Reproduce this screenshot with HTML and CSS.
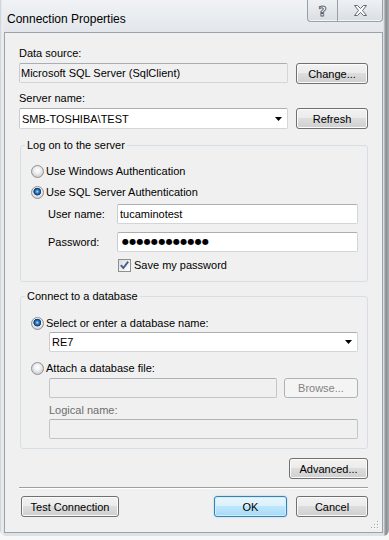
FILE: index.html
```html
<!DOCTYPE html>
<html lang="en">
<head>
    <meta charset="UTF-8">
    <title>Connection Properties</title>
    <link rel="stylesheet" href="styles.css">
</head>
<body>
    <div class="window">
        <div class="titlebar">
            <span class="title">Connection Properties</span>
            <div class="caption-buttons">
                <span class="cap help">?</span>
                <span class="cap close">
                    <svg width="13" height="11" viewBox="0 0 13 11">
                        <polygon points="0.5,0.5 3.5,0.5 6.5,3.5 9.5,0.5 12.5,0.5 8.5,5.5 12.5,10.5 9.5,10.5 6.5,7.5 3.5,10.5 0.5,10.5 4.5,5.5" fill="#fff" stroke="#5f6871" stroke-width="1"/>
                    </svg>
                </span>
            </div>
        </div>

        <div class="client">
            <div class="label">Data source:</div>
            <div class="row">
                <div class="box readonly">Microsoft SQL Server (SqlClient)</div>
                <button class="button w72">Change...</button>
            </div>

            <div class="label spaced">Server name:</div>
            <div class="row">
                <div class="box combo">
                    <span>SMB-TOSHIBA\TEST</span>
                    <svg class="arrow" width="7" height="4" viewBox="0 0 7 4"><polygon points="0,0 7,0 3.5,4" fill="#000"/></svg>
                </div>
                <button class="button w72 tall">Refresh</button>
            </div>

            <fieldset class="group logon">
                <legend>Log on to the server</legend>
                <div class="group-body">
                    <div class="option"><span class="radio"></span>Use Windows Authentication</div>
                    <div class="option second"><span class="radio on"></span>Use SQL Server Authentication</div>
                    <div class="field user">
                        <span class="field-label">User name:</span>
                        <div class="box">tucaminotest</div>
                    </div>
                    <div class="field pass">
                        <span class="field-label">Password:</span>
                        <div class="box dots">&#9679;&#9679;&#9679;&#9679;&#9679;&#9679;&#9679;&#9679;&#9679;&#9679;&#9679;&#9679;</div>
                    </div>
                    <div class="check">
                        <span class="checkbox">
                            <svg width="11" height="11" viewBox="0 0 11 11"><polyline points="1.8,5.2 4.3,8 9.2,1.6" fill="none" stroke="#4a5f8e" stroke-width="1.9"/></svg>
                        </span>Save my password
                    </div>
                </div>
            </fieldset>

            <fieldset class="group database">
                <legend>Connect to a database</legend>
                <div class="group-body">
                    <div class="option"><span class="radio on"></span>Select or enter a database name:</div>
                    <div class="indent db-name">
                        <div class="box combo">
                            <span>RE7</span>
                            <svg class="arrow" width="7" height="4" viewBox="0 0 7 4"><polygon points="0,0 7,0 3.5,4" fill="#000"/></svg>
                        </div>
                    </div>
                    <div class="option attach"><span class="radio"></span>Attach a database file:</div>
                    <div class="indent file-row">
                        <div class="box disabled"></div>
                        <button class="button browse" disabled>Browse...</button>
                    </div>
                    <div class="indent logical-label">Logical name:</div>
                    <div class="indent logical-box">
                        <div class="box disabled"></div>
                    </div>
                </div>
            </fieldset>

            <div class="advanced-row">
                <button class="button advanced">Advanced...</button>
            </div>

            <div class="separator"></div>

            <div class="footer-row">
                <button class="button test">Test Connection</button>
                <div class="footer-right">
                    <button class="button ok">OK</button>
                    <button class="button w72">Cancel</button>
                </div>
            </div>

            <svg class="grip" width="8" height="8" viewBox="0 0 8 8">
                <rect x="6" y="0" width="1" height="1" fill="#a6a6a6"/>
                <rect x="3" y="3" width="1" height="1" fill="#a6a6a6"/>
                <rect x="6" y="3" width="1" height="1" fill="#a6a6a6"/>
                <rect x="0" y="6" width="1" height="1" fill="#a6a6a6"/>
                <rect x="3" y="6" width="1" height="1" fill="#a6a6a6"/>
                <rect x="6" y="6" width="1" height="1" fill="#a6a6a6"/>
                <rect x="7" y="1" width="1" height="1" fill="#fff"/>
                <rect x="4" y="4" width="1" height="1" fill="#fff"/>
                <rect x="7" y="4" width="1" height="1" fill="#fff"/>
                <rect x="1" y="7" width="1" height="1" fill="#fff"/>
                <rect x="4" y="7" width="1" height="1" fill="#fff"/>
                <rect x="7" y="7" width="1" height="1" fill="#fff"/>
            </svg>
        </div>
    </div>
</body>
</html>
```

FILE: styles.css
```css
body {
    margin: 0;
    width: 389px;
    height: 540px;
    overflow: hidden;
    background-color: #f7f7f7;
    font-family: 'Liberation Sans', Arial, sans-serif;
    font-size: 11px;
    line-height: 13px;
    color: #000;
}
.window {
    height: 536px;
    box-sizing: border-box;
    padding: 0 6px 3px 4px;
    display: flex;
    flex-direction: column;
    border-radius: 0 0 6px 6px;
    background:
        linear-gradient(to right, rgba(0,0,0,0) 383px, #f6f7f8 383px, #c3c8cd 384px, #868c92 386px, #a9aeb3 389px),
        linear-gradient(to right, #c9ced3 0, #eef0f2 2px, rgba(0,0,0,0) 4px),
        linear-gradient(180deg, #f0f2f5 0, #e3e7eb 32px, #dde2e7 100%);
}
.titlebar {
    height: 32px;
    display: flex;
    justify-content: space-between;
    align-items: flex-start;
}
.title {
    margin: 12px 0 0 3px;
    font-size: 12px;
    line-height: 14px;
}
.caption-buttons {
    display: flex;
}
.cap {
    height: 22px;
    box-sizing: border-box;
    display: flex;
    align-items: center;
    justify-content: center;
    border: 1px solid #98a0a9;
    border-top: none;
    background: linear-gradient(180deg, #eef1f4 0, #e4e8ec 50%, #d9dee4 100%);
    box-shadow: inset 0 -1px 0 #f4f6f8;
}
.help {
    width: 30px;
    border-right: none;
    border-radius: 0 0 0 4px;
    font-family: 'DejaVu Sans', sans-serif;
    font-size: 14px;
    font-weight: bold;
    color: #fff;
    -webkit-text-stroke: 1px #5f6871;
    padding-top: 1px;
}
.close {
    width: 46px;
    border-radius: 0 0 4px 0;
}

/* client area */
.client {
    flex: 1;
    position: relative;
    border: 1px solid #9aa2aa;
    background-color: #f0f0f0;
    padding: 14px 14px 15px 14px;
}
.label {
    margin-bottom: 3px;
}
.label.spaced {
    margin-top: 8px;
}
.row {
    display: flex;
    align-items: flex-start;
    gap: 8px;
}
.box {
    flex: 1;
    height: 20px;
    box-sizing: border-box;
    border: 1px solid #d2d6da;
    border-top-color: #abadb3;
    border-left-color: #c9ccd1;
    border-radius: 2px;
    background-color: #fff;
    padding: 0 2px;
    line-height: 18px;
    white-space: nowrap;
    overflow: hidden;
}
.box.readonly {
    background-color: #f0f0f0;
    padding-left: 1px;
}
.box.disabled {
    background-color: #f0f0f0;
    border-color: #c2c5c9;
    border-top-color: #adb2b5;
}
.box.combo {
    height: 21px;
    display: flex;
    justify-content: space-between;
    align-items: center;
    padding-right: 5px;
}
.box.dots {
    font-family: 'DejaVu Sans', sans-serif;
    font-size: 8px;
    letter-spacing: 0.3px;
    padding-left: 4px;
}

/* buttons */
.button {
    height: 21px;
    box-sizing: border-box;
    padding: 0;
    border: 1px solid #707070;
    border-radius: 3px;
    background: linear-gradient(180deg, #f2f2f2 0, #ebebeb 50%, #dddddd 50%, #cfcfcf 100%);
    box-shadow: inset 0 0 0 1px #fbfbfb;
    font-family: 'Liberation Sans', Arial, sans-serif;
    font-size: 11px;
    color: #000;
    text-align: center;
}
.w72 {
    width: 72px;
}
.button.browse {
    width: 74px;
    height: 20px;
    border-color: #adb2b5;
    background: #f4f4f4;
    box-shadow: none;
    color: #838383;
}
.button.advanced {
    width: 79px;
}
.button.test {
    width: 98px;
    margin-left: 2px;
}
.button.ok {
    width: 73px;
    border-color: #3c7fb1;
    background: linear-gradient(180deg, #eaf6fd 0, #d9f0fc 50%, #bee6fd 50%, #a7d9f5 100%);
    box-shadow: inset 0 0 0 1px #cdeefd, 0 0 2px #8fd0f5;
}

/* group boxes */
.group {
    margin: 10px 0 0 1px;
    padding: 0;
    min-width: 0;
    border: 1px solid #d5dfe5;
    border-radius: 3px;
}
.group legend {
    margin-left: 4px;
    padding: 0 2px;
    line-height: 13px;
}
.group.database {
    margin-top: 8px;
}
.group-body {
    padding: 13px 9px 9px 10px;
}
.database .group-body {
    padding-top: 14px;
}
.option {
    display: flex;
    align-items: center;
    height: 13px;
}
.option.second {
    margin-top: 8px;
}
.option.attach {
    margin-top: 10px;
}
.radio {
    width: 13px;
    height: 13px;
    box-sizing: border-box;
    margin-right: 2px;
    border-radius: 50%;
    border: 1px solid #8e9196;
    background: radial-gradient(circle at 50% 40%, #ffffff 0, #f0f0f0 3px, #d2d3d5 6px);
}
.radio.on {
    background: radial-gradient(circle at 48% 42%, #bfe6fc 0, #3d8cd4 1.4px, #0f4c8a 3px, #163f6e 3.6px, #f1f1f1 4.2px, #d2d3d5 6px);
}
.field {
    display: flex;
    align-items: center;
    margin-left: 17px;
}
.field.user {
    margin-top: 5px;
}
.field.pass {
    margin-top: 8px;
}
.field-label {
    width: 69px;
}
.check {
    display: flex;
    align-items: center;
    height: 13px;
    margin: 7px 0 0 87px;
}
.checkbox {
    width: 13px;
    height: 13px;
    box-sizing: border-box;
    margin-right: 3px;
    border: 1px solid #8e8f8f;
    background: linear-gradient(135deg, #dcdcdc 0, #f6f6f6 70%, #ffffff 100%);
    display: flex;
    align-items: center;
    justify-content: center;
}
.indent {
    margin-left: 18px;
}
.db-name {
    margin-top: 2px;
}
.db-name .box.combo {
    height: 20px;
}
.file-row {
    display: flex;
    gap: 7px;
    margin-top: 3px;
}
.logical-label {
    margin-top: 6px;
    color: #6d6d6d;
}
.logical-box {
    display: flex;
    margin-top: 2px;
}

.advanced-row {
    display: flex;
    justify-content: flex-end;
    margin-top: 9px;
}
.separator {
    margin-top: 8px;
    border-top: 1px solid #a0a0a0;
    border-bottom: 1px solid #ffffff;
}
.footer-row {
    display: flex;
    justify-content: space-between;
    margin-top: 7px;
}
.footer-right {
    display: flex;
    gap: 9px;
}
.grip {
    position: absolute;
    right: 3px;
    bottom: 3px;
}
```
